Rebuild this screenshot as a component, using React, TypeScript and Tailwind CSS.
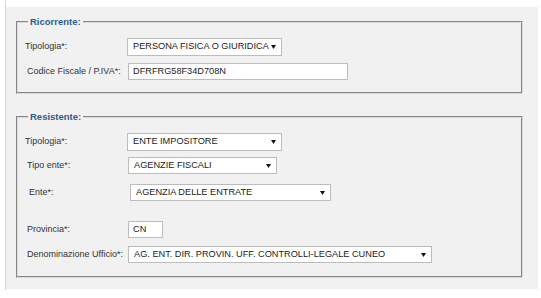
import type { ReactNode } from 'react'

function Arrow() {
  return (
    <svg width="5" height="4" viewBox="0 0 5 4" className="shrink-0">
      <path d="M0 0 L5 0 L2.5 4 Z" fill="#111" />
    </svg>
  )
}

function Select({ value, className }: { value: string; className: string }) {
  return (
    <div
      className={`flex items-center justify-between gap-[2px] bg-white border border-[#bcbcbc] pl-[5px] pr-[5px] text-[9.2px] text-[#222] ${className}`}
    >
      <span className="whitespace-nowrap">{value}</span>
      <Arrow />
    </div>
  )
}

function Input({ value, className }: { value: string; className: string }) {
  return (
    <div className={`flex items-center bg-white border border-[#bcbcbc] pl-[4px] text-[9.2px] text-[#222] ${className}`}>
      <span className="whitespace-nowrap">{value}</span>
    </div>
  )
}

function Row({ label, labelClass, children, className }: { label: string; labelClass?: string; children: ReactNode; className?: string }) {
  return (
    <div className={`flex items-center ${className ?? ''}`}>
      <div className={`w-[102px] shrink-0 text-[9px] text-[#333] whitespace-nowrap ${labelClass ?? ''}`}>{label}</div>
      {children}
    </div>
  )
}

function Legend({ children }: { children: ReactNode }) {
  return (
    <legend className="ml-[3px] px-[2px] text-[9.5px] leading-[12px] font-bold text-[#2f5d8c]">{children}</legend>
  )
}

export default function App() {
  return (
    <div className="w-[541px] h-[298px] bg-white font-['Liberation_Sans',Arial,sans-serif]">
      <div className="ml-[5px] w-[533px] h-[290px] border-l border-[#d6d6d6] pt-[7px]">
        <div className="bg-[#f1f1f1] h-[282px] pt-[9px] pl-[10px] pr-[15px]">
          {/* Ricorrente */}
          <fieldset className="border-2 [border-style:groove] border-[#dadada] h-[78px] pl-[7px]">
            <Legend>Ricorrente:</Legend>
            <Row label="Tipologia*:" className="mt-[10px]">
              <Select value="PERSONA FISICA O GIURIDICA" className="w-[155px] h-[18px]" />
            </Row>
            <Row label="Codice Fiscale / P.IVA*:" labelClass="pl-[2px]" className="mt-[7px]">
              <Input value="DFRFRG58F34D708N" className="ml-[1px] w-[220px] h-[17px]" />
            </Row>
          </fieldset>

          {/* Resistente */}
          <fieldset className="mt-[17px] border-2 [border-style:groove] border-[#dadada] h-[167px] pl-[7px]">
            <Legend>Resistente:</Legend>
            <Row label="Tipologia*:" className="mt-[10px]">
              <Select value="ENTE IMPOSITORE" className="w-[155px] h-[18px]" />
            </Row>
            <Row label="Tipo ente*:" labelClass="pl-[2px]" className="mt-[6px]">
              <Select value="AGENZIE FISCALI" className="ml-[1px] w-[149px] h-[17px]" />
            </Row>
            <Row label="Ente*:" labelClass="pl-[4px]" className="mt-[10px]">
              <Select value="AGENZIA DELLE ENTRATE" className="ml-[3px] w-[201px] h-[17px]" />
            </Row>
            <Row label="Provincia*:" labelClass="pl-[2px]" className="mt-[20px]">
              <Input value="CN" className="ml-[1px] w-[35px] h-[17px]" />
            </Row>
            <Row label="Denominazione Ufficio*:" labelClass="pl-[2px]" className="mt-[8px]">
              <Select value="AG. ENT. DIR. PROVIN. UFF. CONTROLLI-LEGALE CUNEO" className="ml-[1px] w-[304px] h-[17px]" />
            </Row>
          </fieldset>
        </div>
      </div>
    </div>
  )
}
